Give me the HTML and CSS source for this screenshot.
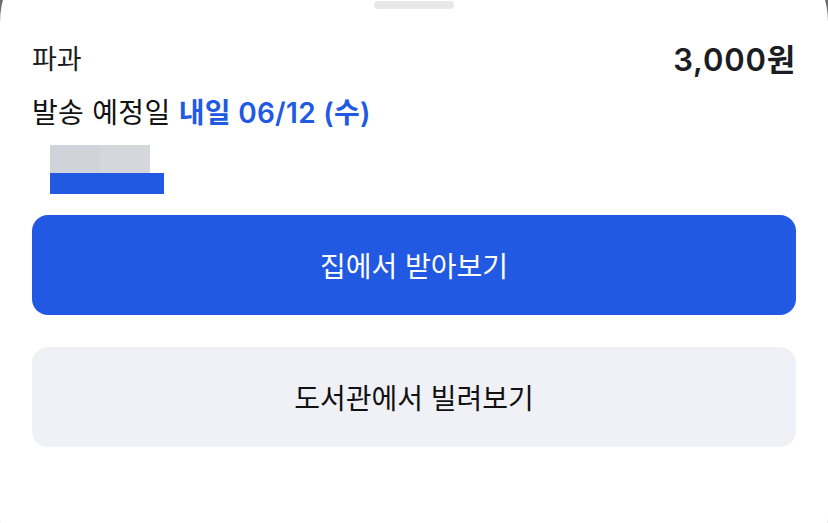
FILE: index.html
```html
<!DOCTYPE html>
<html lang="ko">
<head>
<meta charset="utf-8">
<link rel="stylesheet" href="styles.css">
</head>
<body>
<div class="screen">
  <div class="sheet">
    <div class="handle"></div>
    <div class="content">
      <div class="row-title">
        <span class="title">파과</span>
        <span class="price">3,000원</span>
      </div>
      <div class="ship">발송 예정일 <strong class="date">내일 06/12 (수)</strong></div>
      <div class="placeholder">
        <div class="ph-top"><span class="ph-a"></span><span class="ph-b"></span></div>
        <div class="ph-bar"></div>
      </div>
      <div class="actions">
        <button class="btn btn-primary">집에서 받아보기</button>
        <button class="btn btn-secondary">도서관에서 빌려보기</button>
      </div>
    </div>
  </div>
</div>
</body>
</html>
```
FILE: styles.css
```css
html, body {
  margin: 0;
  padding: 0;
  width: 828px;
  height: 523px;
  overflow: hidden;
  background: #6e6e6e;
  font-family: Inter, "Noto Sans CJK KR", "Noto Sans", sans-serif;
}
.screen {
  width: 828px;
  height: 523px;
  overflow: hidden;
}
.sheet {
  margin-top: -60px;
  padding-top: 60px;
  height: 600px;
  background: #ffffff;
  border-radius: 82px;
  position: relative;
}
.handle {
  position: absolute;
  top: 61px;
  left: 374px;
  width: 80px;
  height: 8px;
  border-radius: 4px;
  background: #e8e8e8;
}
.content {
  padding: 0 32px;
}
.row-title {
  display: flex;
  justify-content: space-between;
  align-items: center;
  height: 40px;
  padding-top: 40px;
}
.title {
  font-size: 27px;
  color: #1b1d22;
  line-height: 40px;
}
.price {
  font-size: 31px;
  font-weight: 600;
  letter-spacing: 0.8px;
  color: #1b1d22;
  line-height: 40px;
}
.ship {
  margin-top: 13px;
  font-size: 28px;
  letter-spacing: 0.3px;
  line-height: 40px;
  color: #111111;
}
.date {
  color: #2259e3;
  font-weight: 600;
}
.placeholder {
  margin-top: 12px;
  margin-left: 18px;
}
.ph-top {
  display: flex;
  height: 28px;
}
.ph-a {
  width: 50px;
  background: #d0d3da;
}
.ph-b {
  width: 50px;
  background: #d6d7dc;
}
.ph-bar {
  width: 114px;
  height: 21px;
  background: #2259e3;
}
.actions {
  margin-top: 21px;
  display: flex;
  flex-direction: column;
  gap: 32px;
}
.btn {
  height: 100px;
  border: none;
  border-radius: 16px;
  font-family: inherit;
  font-size: 28px;
  width: 100%;
}
.btn-primary {
  background: #2259e3;
  color: #ffffff;
}
.btn-secondary {
  background: #f0f1f6;
  color: #111111;
}
```
